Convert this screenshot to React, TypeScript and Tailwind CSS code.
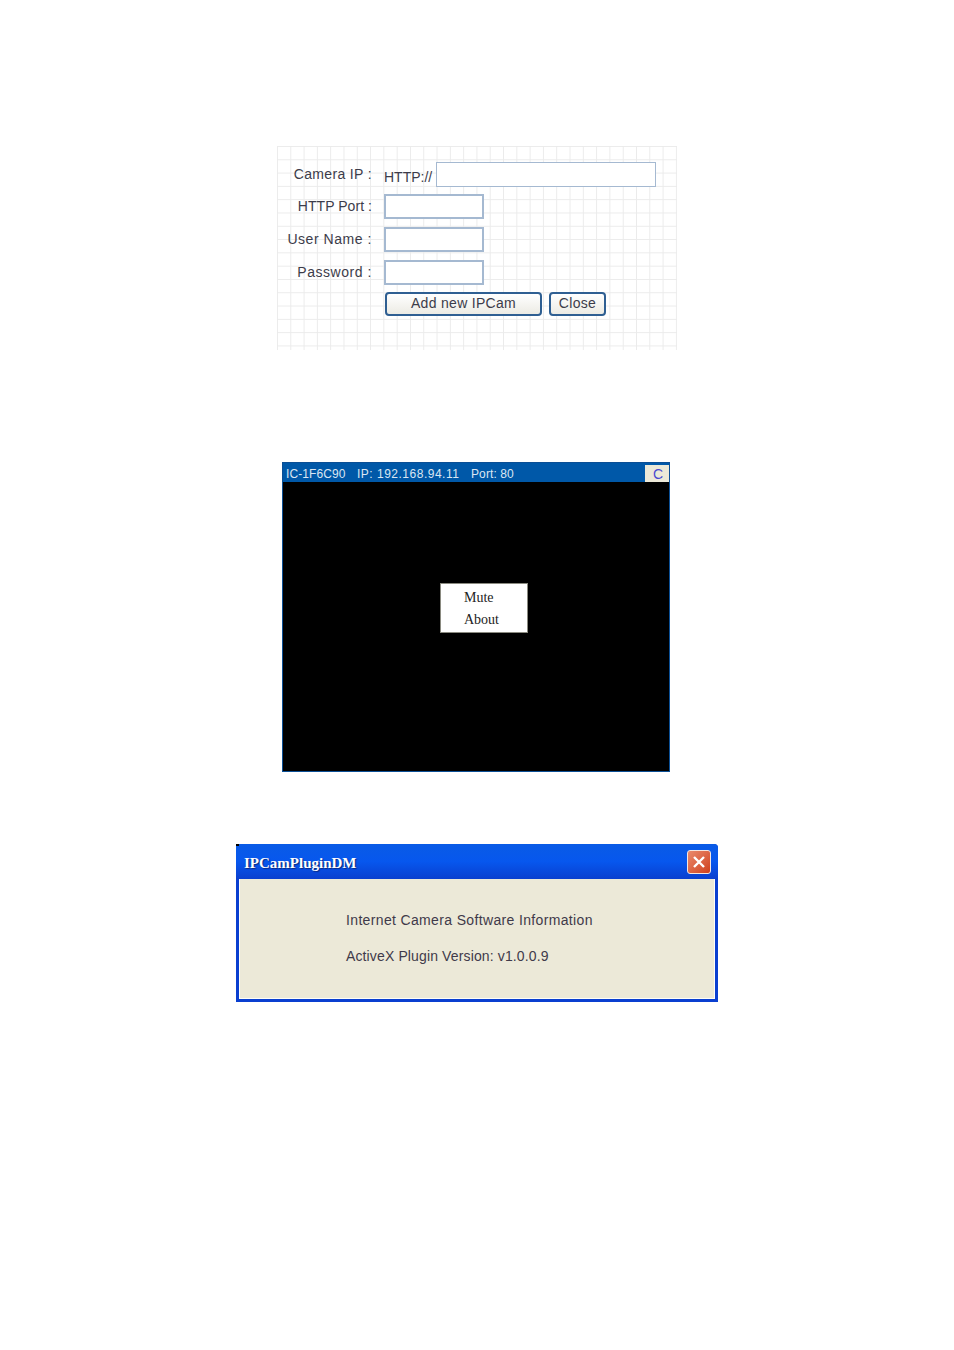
const sans = "font-['Liberation_Sans',Arial,sans-serif]"

const fieldClass = 'h-[25px] border-2 border-[#a5b9d1] bg-white'

const FormRow = ({ label, spacing, top, children }: { label: string; spacing: string; top: string; children: React.ReactNode }) => (
  <div className={`flex items-center h-[25px] ${top}`}>
    <div className={`w-[95px] text-right text-[14px] text-[#3c3c4a] whitespace-nowrap ${spacing}`}>{label}</div>
    <div className="ml-[12px] flex items-center">{children}</div>
  </div>
)

const XpButton = ({ label, width }: { label: string; width: string }) => (
  <button className={`${width} h-[24px] rounded-[4px] border-2 border-[#2f5f92] bg-gradient-to-b from-white to-[#ecebe4] pb-[2px] text-[14px] tracking-[0.3px] text-[#3c3c4a] leading-none`}>
    {label}
  </button>
)

const AddCameraForm = () => (
  <div className="ml-[277px] w-[400px] h-[204px] pt-[16px] bg-white bg-[linear-gradient(#ebebeb_1px,transparent_1px),linear-gradient(90deg,#ebebeb_1px,transparent_1px)] bg-[size:13.3px_13.3px]">
    <FormRow label="Camera IP :" spacing="tracking-[0.35px]" top="mt-0">
      <span className="w-[52px] pt-[5px] text-[14px] text-[#3c3c4a]">HTTP://</span>
      <div className={`${fieldClass} w-[220px] border-[1.5px] border-[#8fa8c6]`} />
    </FormRow>
    <FormRow label="HTTP Port :" spacing="tracking-[0.05px]" top="mt-[7px]">
      <div className={`${fieldClass} w-[100px]`} />
    </FormRow>
    <FormRow label="User Name :" spacing="tracking-[0.55px]" top="mt-[8px]">
      <div className={`${fieldClass} w-[100px]`} />
    </FormRow>
    <FormRow label="Password :" spacing="tracking-[0.55px]" top="mt-[8px]">
      <div className={`${fieldClass} w-[100px]`} />
    </FormRow>
    <div className="mt-[7px] ml-[108px] flex gap-[7px]">
      <XpButton label="Add new IPCam" width="w-[157px]" />
      <XpButton label="Close" width="w-[57px]" />
    </div>
  </div>
)

const CameraPanel = () => (
  <div className="relative ml-[282px] mt-[112px] w-[388px] h-[310px] flex flex-col border border-[#0b4f95] bg-black">
    <div className="h-[19px] flex items-center justify-between bg-[#0058a8] pl-[3px] pr-0">
      <div className="flex pt-[2px] text-[12px] text-[#dbe6f2] leading-none">
        <span className="w-[71px] tracking-[0.1px]">IC-1F6C90</span>
        <span className="w-[114px] tracking-[0.5px]">IP: 192.168.94.11</span>
        <span className="tracking-[0.1px]">Port: 80</span>
      </div>
      <div className="mt-[2px] w-[24px] h-[17px] flex items-center justify-center bg-[#ece9d8] pl-[2px] text-[14px] leading-none text-[#4a4ad0]">C</div>
    </div>
    <div className="absolute left-[157px] top-[120px] w-[88px] h-[50px] border border-[#8a8a80] bg-white pl-[23px] pt-[3px] font-['Liberation_Serif',serif] text-[14px] leading-[22px] text-[#222]">
      <div>Mute</div>
      <div>About</div>
    </div>
  </div>
)

const AboutDialog = () => (
  <div className="relative ml-[236px] mt-[72px] w-[482px] h-[158px] flex flex-col rounded-tr-[4px] bg-[#0a3fd0] overflow-hidden">
    <div className="absolute left-0 top-0 w-[3px] h-[2px] bg-black" />
    <div className="h-[35px] shrink-0 flex items-center justify-between pl-[8px] pr-[7px] bg-gradient-to-b from-[#0a5be6] via-[#0757ee] to-[#0a3fcf]">
      <span className="pt-[3px] font-['Liberation_Serif',serif] text-[15px] font-bold text-white [text-shadow:1px_1px_1px_#0a2a80]">IPCamPluginDM</span>
      <div className="w-[24px] h-[24px] flex items-center justify-center rounded-[3px] border border-[#f3e6e0] bg-gradient-to-br from-[#e98a6c] to-[#cf3e18]">
        <svg width="16" height="16" viewBox="0 0 16 16" fill="none">
          <path d="M3 3 L13 13 M13 3 L3 13" stroke="white" strokeWidth="2.4" />
        </svg>
      </div>
    </div>
    <div className="mx-[3px] mb-[3px] flex-1 border border-[#fdfdf8] border-t-0 bg-[#ece9d8] pl-[106px] pt-[31px] text-[14px] leading-[20px] text-[#3f3a4a]">
      <div className="tracking-[0.35px]">Internet Camera Software Information</div>
      <div className="mt-[16px] tracking-[0.13px]">ActiveX Plugin Version: v1.0.0.9</div>
    </div>
  </div>
)

export default function App() {
  return (
    <div className={`w-[954px] h-[1350px] bg-white pt-[146px] overflow-hidden ${sans}`}>
      <AddCameraForm />
      <CameraPanel />
      <AboutDialog />
    </div>
  )
}
